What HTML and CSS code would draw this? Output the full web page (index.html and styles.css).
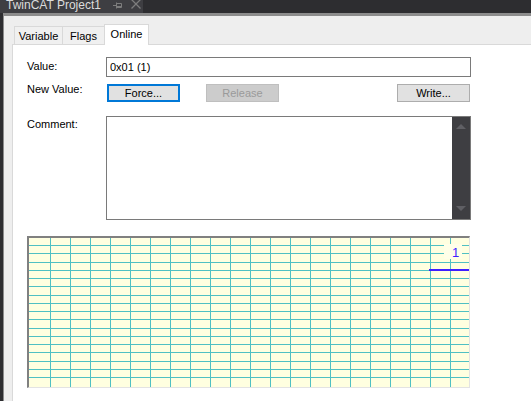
FILE: index.html
```html
<!DOCTYPE html>
<html lang="en">

<head>
    <meta charset="UTF-8">
    <title>TwinCAT Project1</title>
    <link rel="stylesheet" href="styles.css">
</head>

<body>

    <!-- Tool window caption -->
    <div class="titlebar">
        <div class="doc-tab">
            <span class="doc-title">TwinCAT Project1</span>
            <svg class="pin" width="10" height="8" viewBox="0 0 10 8">
                <path d="M0 3.5H3.5M3.5 0.5V6.5M3.5 1.5H8.5V5.5H3.5M3.5 4.5H8.5" stroke="#7d7d7d" fill="none" />
            </svg>
            <svg class="close" width="10" height="9" viewBox="0 0 10 9">
                <path d="M0.5 -0.5L9.5 8.5M9.5 -0.5L0.5 8.5" stroke="#7d7d7d" stroke-width="1.3" fill="none" />
            </svg>
        </div>
    </div>

    <div class="panel">
        <div class="tabcontrol">
            <!-- Tabs -->
            <div class="tabstrip">
                <div class="tab tab-variable">Variable</div>
                <div class="tab tab-flags">Flags</div>
                <div class="tab tab-online active">Online</div>
            </div>

            <!-- Online page -->
            <div class="tabpage">
                <div class="form-row row-value">
                    <label class="field-label">Value:</label>
                    <input class="textbox" type="text" value="0x01 (1)" readonly>
                </div>

                <div class="form-row row-buttons">
                    <label class="field-label">New Value:</label>
                    <button class="btn btn-force">Force...</button>
                    <button class="btn btn-release" disabled>Release</button>
                    <button class="btn btn-write">Write...</button>
                </div>

                <div class="form-row row-comment">
                    <label class="field-label">Comment:</label>
                    <div class="comment-box">
                        <div class="scrollbar">
                            <span class="arrow-up"></span>
                            <span class="arrow-down"></span>
                        </div>
                    </div>
                </div>

                <!-- Trend chart -->
                <div class="chart">
                    <svg width="440" height="149" viewBox="0 0 440 149" shape-rendering="crispEdges">
                        <g fill="#4fc0c3">
                            <rect x="0" y="7" width="440" height="1" />
                            <rect x="0" y="15" width="440" height="1" />
                            <rect x="0" y="24" width="440" height="1" />
                            <rect x="0" y="32" width="440" height="1" />
                            <rect x="0" y="40" width="440" height="1" />
                            <rect x="0" y="48" width="440" height="1" />
                            <rect x="0" y="57" width="440" height="1" />
                            <rect x="0" y="65" width="440" height="1" />
                            <rect x="0" y="73" width="440" height="1" />
                            <rect x="0" y="81" width="440" height="1" />
                            <rect x="0" y="90" width="440" height="1" />
                            <rect x="0" y="98" width="440" height="1" />
                            <rect x="0" y="106" width="440" height="1" />
                            <rect x="0" y="114" width="440" height="1" />
                            <rect x="0" y="123" width="440" height="1" />
                            <rect x="0" y="131" width="440" height="1" />
                            <rect x="0" y="139" width="440" height="1" />

                            <rect x="21" y="0" width="1" height="149" />
                            <rect x="41" y="0" width="1" height="149" />
                            <rect x="61" y="0" width="1" height="149" />
                            <rect x="81" y="0" width="1" height="149" />
                            <rect x="101" y="0" width="1" height="149" />
                            <rect x="121" y="0" width="1" height="149" />
                            <rect x="141" y="0" width="1" height="149" />
                            <rect x="161" y="0" width="1" height="149" />
                            <rect x="181" y="0" width="1" height="149" />
                            <rect x="201" y="0" width="1" height="149" />
                            <rect x="221" y="0" width="1" height="149" />
                            <rect x="241" y="0" width="1" height="149" />
                            <rect x="261" y="0" width="1" height="149" />
                            <rect x="281" y="0" width="1" height="149" />
                            <rect x="301" y="0" width="1" height="149" />
                            <rect x="321" y="0" width="1" height="149" />
                            <rect x="341" y="0" width="1" height="149" />
                            <rect x="361" y="0" width="1" height="149" />
                            <rect x="381" y="0" width="1" height="149" />
                            <rect x="401" y="0" width="1" height="149" />
                            <rect x="421" y="0" width="1" height="149" />
                        </g>
                        <!-- value label + current value line -->
                        <rect x="415" y="6" width="18" height="15" fill="#ffffe8" />
                        <text x="423" y="19" class="chart-label">1</text>
                        <rect x="400" y="31" width="40" height="2" fill="#3f1fff" />
                    </svg>
                </div>
            </div>
        </div>
    </div>

</body>

</html>
```

FILE: styles.css
```css
body {
    margin: 0;
    padding: 0;
    width: 531px;
    height: 401px;
    overflow: hidden;
    background-color: #2d2d30;
    font-family: "Liberation Sans", Arial, sans-serif;
    font-size: 11px;
    color: #000;
    display: flex;
    flex-direction: column;
}

/* Caption bar */
.titlebar {
    height: 13px;
    display: flex;
    overflow: hidden;
    flex-shrink: 0;
}

.doc-tab {
    width: 143px;
    background-color: #3e3e42;
    display: flex;
    align-items: flex-start;
    padding-left: 6px;
    box-sizing: border-box;
}

.doc-title {
    color: #dcdcdc;
    font-size: 12px;
    line-height: 11px;
    white-space: nowrap;
}

.doc-tab .pin {
    margin-left: 12px;
    margin-top: 2px;
}

.doc-tab .close {
    margin-left: 8px;
}

/* Light tool window body */
.panel {
    flex: 1;
    margin-left: 3px;
    border-left: 1px solid #8c8c8c;
    border-top: 3px solid #8c8c8c;
    background-color: #eeeeee;
    display: flex;
}

.tabcontrol {
    flex: 1;
    margin-left: 8px;
    display: flex;
    flex-direction: column;
}

.tabstrip {
    height: 28px;
    display: flex;
    align-items: flex-end;
    padding-left: 2px;
}

.tab {
    height: 18px;
    box-sizing: border-box;
    border: 1px solid #d9d9d9;
    border-bottom: none;
    background-color: #f0f0f0;
    text-align: center;
    line-height: 13px;
    padding-top: 3px;
}

.tab-variable {
    width: 49px;
}

.tab-flags {
    width: 43px;
    margin-left: -1px;
}

.tab-online {
    width: 45px;
    margin-left: -1px;
}

.tab.active {
    height: 21px;
    margin-bottom: -1px;
    padding-top: 3px;
    background-color: #fff;
    position: relative;
    z-index: 1;
}

.tabpage {
    flex: 1;
    background-color: #fff;
    border-top: 1px solid #d9d9d9;
    border-left: 1px solid #d9d9d9;
    padding: 12px 0 0 14px;
}

/* Form rows */
.form-row {
    display: flex;
    align-items: flex-start;
    width: 444px;
}

.field-label {
    width: 79px;
    flex-shrink: 0;
    line-height: 13px;
}

.row-value {
    height: 20px;
}

.row-value .field-label {
    padding-top: 3px;
}

.textbox {
    width: 365px;
    height: 20px;
    box-sizing: border-box;
    margin: 0;
    border: 1px solid #7a7a7a;
    padding: 0 3px;
    font: inherit;
    line-height: 13px;
    color: #000;
    outline: none;
}

.row-buttons {
    margin-top: 7px;
    height: 18px;
}

.row-buttons .field-label {
    margin-top: -1px;
}

.btn {
    width: 73px;
    height: 18px;
    box-sizing: border-box;
    margin: 0;
    padding: 0;
    border: 1px solid #adadad;
    background-color: #e1e1e1;
    font: inherit;
    line-height: 13px;
    color: #000;
}

.btn-force {
    margin-left: 1px;
    border: 2px solid #0078d7;
}

.btn-release {
    margin-left: 26px;
    background-color: #cccccc;
    border-color: #bfbfbf;
    color: #9a9a9a;
}

.btn-write {
    margin-left: auto;
    margin-right: 1px;
}

.row-comment {
    margin-top: 14px;
}

.row-comment .field-label {
    padding-top: 2px;
}

.comment-box {
    width: 365px;
    height: 104px;
    box-sizing: border-box;
    border: 1px solid #7a7a7a;
    display: flex;
    justify-content: flex-end;
}

.scrollbar {
    width: 18px;
    background-color: #3e3e42;
    display: flex;
    flex-direction: column;
    justify-content: space-between;
    align-items: center;
    padding: 7px 0 8px;
    box-sizing: border-box;
}

.arrow-up {
    width: 0;
    height: 0;
    border-left: 5px solid transparent;
    border-right: 5px solid transparent;
    border-bottom: 5px solid #5f5f64;
}

.arrow-down {
    width: 0;
    height: 0;
    border-left: 5px solid transparent;
    border-right: 5px solid transparent;
    border-top: 5px solid #5f5f64;
}

/* Trend chart */
.chart {
    margin-top: 16px;
    width: 443px;
    box-sizing: border-box;
    border-left: 2px solid #808080;
    border-top: 2px solid #808080;
    border-right: 1px solid #e3e3e3;
    border-bottom: 1px solid #e3e3e3;
    background-color: #ffffe0;
}

.chart svg {
    display: block;
}

.chart-label {
    font-family: "Liberation Sans", Arial, sans-serif;
    font-size: 13px;
    fill: #3f1fff;
}
```
